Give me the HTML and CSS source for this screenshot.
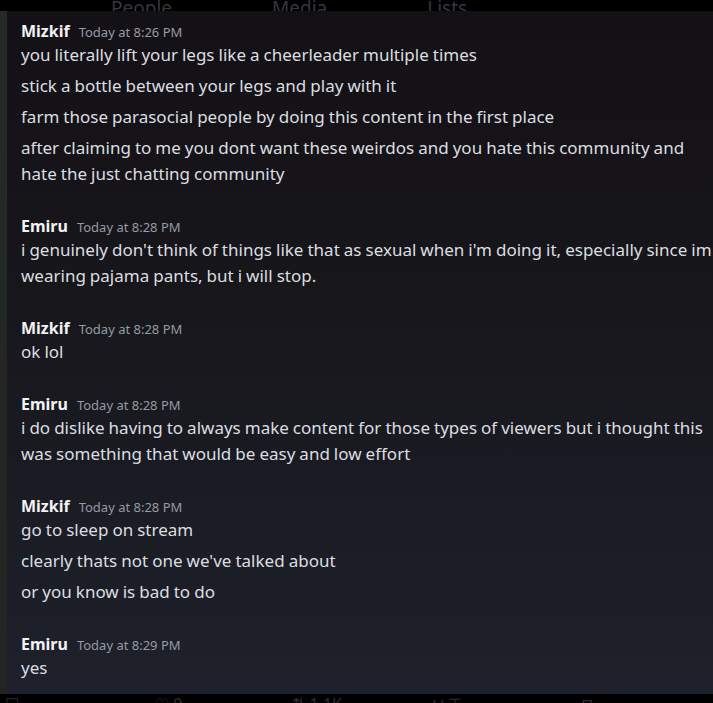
FILE: index.html
```html
<!DOCTYPE html>
<html>
<head>
<meta charset="utf-8">
<link rel="stylesheet" href="styles.css">
</head>
<body>
<div class="topbar">
  <span class="tab t1">People</span>
  <span class="tab t2">Media</span>
  <span class="tab t3">Lists</span>
</div>
<div class="panel">
  <div class="edge"></div>
  <div class="chat">
    <div class="group">
      <div class="head"><span class="name">Mizkif</span><span class="time">Today at 8:26 PM</span></div>
      <div class="msg">you literally lift your legs like a cheerleader multiple times</div>
      <div class="msg">stick a bottle between your legs and play with it</div>
      <div class="msg">farm those parasocial people by doing this content in the first place</div>
      <div class="msg">after claiming to me you dont want these weirdos and you hate this community and hate the just chatting community</div>
    </div>
    <div class="group">
      <div class="head"><span class="name">Emiru</span><span class="time">Today at 8:28 PM</span></div>
      <div class="msg">i genuinely don't think of things like that as sexual when i'm doing it, especially since im wearing pajama pants, but i will stop.</div>
    </div>
    <div class="group">
      <div class="head"><span class="name">Mizkif</span><span class="time">Today at 8:28 PM</span></div>
      <div class="msg">ok lol</div>
    </div>
    <div class="group">
      <div class="head"><span class="name">Emiru</span><span class="time">Today at 8:28 PM</span></div>
      <div class="msg">i do dislike having to always make content for those types of viewers but i thought this was something that would be easy and low effort</div>
    </div>
    <div class="group">
      <div class="head"><span class="name">Mizkif</span><span class="time">Today at 8:28 PM</span></div>
      <div class="msg">go to sleep on stream</div>
      <div class="msg">clearly thats not one we've talked about</div>
      <div class="msg">or you know is bad to do</div>
    </div>
    <div class="group">
      <div class="head"><span class="name">Emiru</span><span class="time">Today at 8:29 PM</span></div>
      <div class="msg">yes</div>
    </div>
  </div>
</div>
<div class="bottombar">
  <span class="ic b1">☐</span>
  <span class="ic b2">♡ 9</span>
  <span class="ic b3">⇅ 1.1K</span>
  <span class="ic b4">⊔ ⊤</span>
  <span class="ic b5">▭ ⊓</span>
</div>
</body>
</html>
```
FILE: styles.css
```css
html, body {
  margin: 0;
  padding: 0;
  background: #000;
  width: 713px;
  height: 703px;
  overflow: hidden;
  font-family: "Noto Sans", "Open Sans", sans-serif;
}
.topbar {
  height: 11px;
  background: #000;
  overflow: hidden;
  display: flex;
  align-items: flex-end;
}
.tab {
  font-size: 19px;
  line-height: 19px;
  color: #36363a;
  margin-bottom: -7px;
}
.t1 { margin-left: 111px; }
.t2 { margin-left: 100px; }
.t3 { margin-left: 100px; }
.panel {
  height: 683px;
  display: flex;
  overflow: hidden;
  background: linear-gradient(180deg, #141116 0%, #17161b 40%, #1e212b 100%);
}
.edge {
  width: 7px;
  flex: none;
  background: linear-gradient(180deg, #262a27 0%, #222522 100%);
}
.chat {
  flex: none;
  width: 698px;
  padding: 8px 0 0 14px;
  display: flex;
  flex-direction: column;
  gap: 27px;
}
.head {
  height: 23px;
  display: flex;
  align-items: center;
}
.name {
  font-weight: 700;
  font-size: 16px;
  color: #f2f3f5;
}
.time {
  font-size: 13px;
  color: #949ba4;
  margin-left: 9px;
  margin-top: 2px;
}
.msg {
  font-size: 17px;
  line-height: 26px;
  color: #dbdee1;
  margin-bottom: 5px;
  word-spacing: -0.4px;
}
.msg:last-child { margin-bottom: 0; }
.bottombar {
  height: 9px;
  background: #000;
  overflow: hidden;
  display: flex;
}
.ic {
  font-size: 16px;
  line-height: 16px;
  color: #2e2e32;
  margin-top: 2px;
  white-space: nowrap;
}
.b1 { margin-left: 5px; }
.b2 { margin-left: 136px; }
.b3 { margin-left: 110px; }
.b4 { margin-left: 90px; }
.b5 { margin-left: 100px; }
```
